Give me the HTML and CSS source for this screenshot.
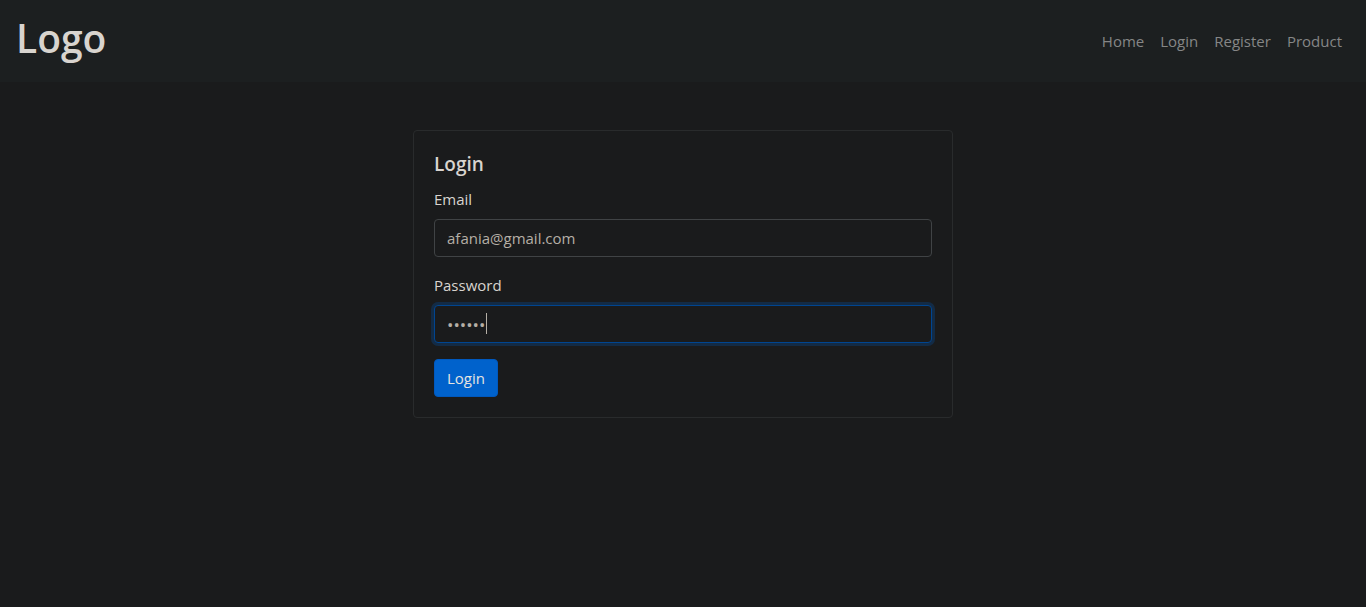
FILE: index.html
```html
<!DOCTYPE html>
<html lang="en">
<head>
  <meta charset="utf-8">
  <meta name="viewport" content="width=device-width, initial-scale=1">
  <title>Login</title>
  <link rel="stylesheet" href="styles.css">
</head>
<body>
  <header class="navbar">
    <h1 class="logo">Logo</h1>
    <nav class="nav">
      <a class="nav-link" href="#">Home</a>
      <a class="nav-link" href="#">Login</a>
      <a class="nav-link" href="#">Register</a>
      <a class="nav-link" href="#">Product</a>
    </nav>
  </header>
  <main class="page">
    <form class="card">
      <h2 class="card-title">Login</h2>
      <div class="field">
        <label for="email">Email</label>
        <input class="control" id="email" type="email" value="afania@gmail.com">
      </div>
      <div class="field">
        <label for="password">Password</label>
        <div class="control-wrap">
          <input class="control control-active" id="password" type="password" value="afania">
          <span class="caret"></span>
        </div>
      </div>
      <button class="button" type="button">Login</button>
    </form>
  </main>
</body>
</html>
```
FILE: styles.css
```css
* {
  box-sizing: border-box;
}

body {
  margin: 0;
  background: #1a1b1c;
  color: #d8d4cf;
  font: 15px/24px "Segoe UI", "Open Sans", "Noto Sans", sans-serif;
}

.navbar {
  display: flex;
  align-items: center;
  justify-content: space-between;
  padding: 17px 24px 17px 16px;
  background: #1c1f20;
}

.logo {
  margin: 0;
  padding-bottom: 6px;
  font-size: 39px;
  font-weight: 600;
  line-height: 42px;
}

.nav {
  display: flex;
  gap: 16px;
}

.nav-link {
  color: #858686;
  text-decoration: none;
}

.page {
  padding: 48px 16px;
}

.card {
  max-width: 540px;
  margin: 0 auto;
  padding: 20px;
  border: 1px solid #292b2c;
  border-radius: 4px;
}

.card-title {
  margin: 0 0 10px;
  font-size: 19px;
  font-weight: 600;
  line-height: 26px;
}

.field {
  margin-bottom: 16px;
}

.field label {
  display: block;
  margin-bottom: 8px;
}

.control {
  display: block;
  width: 100%;
  height: 38px;
  padding: 6px 12px;
  border: 1px solid #404345;
  border-radius: 4px;
  outline: 0;
  background: #1a1b1c;
  color: #b5afa6;
  font: inherit;
}

.control[type="password"] {
  font-size: 17px;
}

.control-active,
.control:focus {
  border-color: #004590;
  box-shadow: 0 0 0 3px #132b45;
}

.control-wrap {
  position: relative;
}

.caret {
  position: absolute;
  top: 8px;
  left: 52px;
  width: 1px;
  height: 21px;
  background: #b5afa6;
}

.button {
  display: block;
  height: 38px;
  padding: 6px 12px;
  border: 1px solid #0059bf;
  border-radius: 4px;
  background: #0062cc;
  color: #e5e4e1;
  font: inherit;
}
```
